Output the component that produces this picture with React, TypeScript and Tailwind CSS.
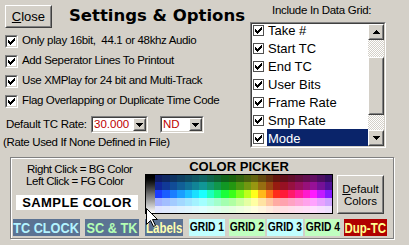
import React from "react";

const raisedOuter =
  "border border-t-white border-l-white border-b-[#404040] border-r-[#404040]";
const raisedInner =
  "border border-t-[#d4d0c8] border-l-[#d4d0c8] border-b-[#808080] border-r-[#808080]";
const sunkenOuter =
  "border border-t-[#808080] border-l-[#808080] border-b-white border-r-white";
const sunkenInner =
  "border border-t-[#404040] border-l-[#404040] border-b-[#d4d0c8] border-r-[#d4d0c8]";

function CheckMark({ color = "#000" }: { color?: string }) {
  return (
    <svg width="7" height="7" viewBox="0 0 7 7" shapeRendering="crispEdges">
      {[2, 3, 4, 3, 2, 1, 0].map((y, i) => (
        <rect key={i} x={i} y={y} width="1" height="3" fill={color} />
      ))}
    </svg>
  );
}

function Box3D() {
  return (
    <div className={`w-[13px] h-[13px] shrink-0 ${sunkenOuter}`}>
      <div className={`w-full h-full bg-white flex items-center justify-center ${sunkenInner}`}>
        <CheckMark />
      </div>
    </div>
  );
}

function FlatCheck() {
  return (
    <div className="w-[11px] h-[11px] shrink-0 border border-[#505050] bg-white flex items-center justify-center">
      <CheckMark />
    </div>
  );
}

function Tri({ dir }: { dir: "up" | "down" }) {
  const rows = [
    [3, 1],
    [2, 3],
    [1, 5],
    [0, 7],
  ];
  return (
    <svg width="7" height="4" viewBox="0 0 7 4" shapeRendering="crispEdges">
      {rows.map(([x, w], i) => (
        <rect key={i} x={x} y={dir === "up" ? i : 3 - i} width={w} height="1" fill="#000" />
      ))}
    </svg>
  );
}

function Raised({ className, children }: { className: string; children?: React.ReactNode }) {
  return (
    <div className={`${className} ${raisedOuter} bg-[#d4d0c8]`}>
      <div className={`w-full h-full flex items-center justify-center ${raisedInner}`}>{children}</div>
    </div>
  );
}

function Combo({ w, v }: { w: string; v: string }) {
  return (
    <div className={`${w} h-[17px] ${sunkenOuter}`}>
      <div className={`h-full bg-white flex ${sunkenInner}`}>
        <span className="flex-1 text-[#c00000] text-[11.5px] leading-[13px] pl-[1px]">{v}</span>
        <div className={`w-[13px] h-full ${raisedOuter} bg-[#d4d0c8]`}>
          <div className={`w-full h-full flex items-center justify-center ${raisedInner}`}>
            <Tri dir="down" />
          </div>
        </div>
      </div>
    </div>
  );
}

const checks = [
  "Only play 16bit,  44.1 or 48khz Audio",
  "Add Seperator Lines To Printout",
  "Use XMPlay for 24 bit and Multi-Track",
  "Flag Overlapping or Duplicate Time Code",
];

const gridItems = ["Take #", "Start TC", "End TC", "User Bits", "Frame Rate", "Smp Rate", "Mode"];

const hueStops: [number, number][] = [
  [0, 235],
  [6.5, 180],
  [10, 120],
  [13.5, 60],
  [16.5, 5],
  [21.5, -60],
  [24, -100],
];
function hueAt(c: number) {
  for (let i = 0; i < hueStops.length - 1; i++) {
    const [a, ha] = hueStops[i];
    const [b, hb] = hueStops[i + 1];
    if (c >= a && c <= b) return ha + ((c - a) / (b - a)) * (hb - ha);
  }
  return hueStops[hueStops.length - 1][1];
}
const paletteRows = [
  { s: 75, l: 22, h: 7 },
  { s: 80, l: 33, h: 8 },
  { s: 100, l: 55, h: 8 },
  { s: 100, l: 82, h: 8 },
  { s: 100, l: 94, h: 7 },
];
const COLS = 24;

function Palette() {
  return (
    <div className="h-[40px] border border-black flex bg-black">
      <div className="w-[9px] h-full bg-linear-to-b from-black via-[#707070] to-white" />
      <div className="flex-1 flex flex-col">
        {paletteRows.map((r, ri) => (
          <div key={ri} className="flex" style={{ height: r.h }}>
            {Array.from({ length: COLS }).map((_, ci) => {
              const h = (hueAt(ci + 0.5) + 360) % 360;
              return (
                <div
                  key={ci}
                  className="flex-1"
                  style={{ background: `hsl(${h} ${r.s}% ${r.l}%)` }}
                />
              );
            })}
          </div>
        ))}
      </div>
    </div>
  );
}

function Chip({
  cls,
  txt,
  text,
}: {
  cls: string;
  txt: string;
  text: string;
}) {
  return (
    <div className={`h-full flex items-center justify-center overflow-visible ${cls}`}>
      <span className={`font-bold whitespace-nowrap scale-x-[0.82] leading-none ${txt}`}>{text}</span>
    </div>
  );
}

export default function App() {
  return (
    <div className="w-[409px] h-[245px] bg-[#d4d0c8] overflow-hidden relative text-black font-['Liberation_Sans',Arial,sans-serif]">
      <div className="flex h-[155px]">
        {/* left column */}
        <div className="w-[245px] pl-[5px] pt-[5px]">
          <div className="flex items-center">
            <Raised className="w-[50px] h-[23px]">
              <span className="text-[13px] leading-none">
                <span className="underline">C</span>lose
              </span>
            </Raised>
            <div className="ml-[17px] font-['DejaVu_Sans',sans-serif] font-bold text-[16.5px] leading-none whitespace-nowrap">
              Settings &amp; Options
            </div>
          </div>
          <div className="mt-[3px]">
            {checks.map((c) => (
              <div key={c} className="flex items-center h-[20px]">
                <Box3D />
                <span className="ml-[4px] text-[11.5px] tracking-[-0.35px] whitespace-pre leading-none">{c}</span>
              </div>
            ))}
          </div>
          <div className="mt-[5px] flex items-center h-[17px]">
            <span className="w-[86px] pl-[1px] text-[11.5px] tracking-[-0.3px] leading-none">Default TC Rate:</span>
            <Combo w="w-[57px]" v="30.000" />
            <div className="ml-[12px]">
              <Combo w="w-[44px]" v="ND" />
            </div>
          </div>
          <div className="mt-[2px] -ml-[2px] text-[11.5px] tracking-[-0.35px] leading-[14px] whitespace-nowrap">
            (Rate Used If None Defined in File)
          </div>
        </div>
        {/* right column */}
        <div className="ml-[5px] w-[136px]">
          <div className="pt-[3px] pl-[22px] text-[11.5px] tracking-[-0.3px] leading-[14px] whitespace-nowrap">Include In Data Grid:</div>
          <div className={`mt-[5px] w-[136px] h-[126px] ${sunkenOuter}`}>
            <div className={`w-full h-full bg-white flex ${sunkenInner}`}>
              <div className="flex-1 overflow-hidden">
                <div className="-mt-[3px]">
                  {gridItems.map((g) => {
                    const sel = g === "Mode";
                    return (
                      <div key={g} className="flex items-center h-[18px] pl-[1px]">
                        <FlatCheck />
                        <span
                          className={`ml-[3px] pl-[1px] h-[18px] flex-1 flex items-center text-[13px] leading-none ${
                            sel ? "bg-[#0a246a] text-white" : ""
                          }`}
                        >
                          {g}
                        </span>
                      </div>
                    );
                  })}
                </div>
              </div>
              <div className="w-[16px] flex flex-col">
                <Raised className="w-[16px] h-[16px]">
                  <Tri dir="up" />
                </Raised>
                <div className="h-[17px] [background-image:repeating-conic-gradient(#d4d0c8_0%_25%,#ffffff_0%_50%)] [background-size:2px_2px]" />
                <Raised className="w-[16px] h-[58px]" />
                <div className="h-[15px] [background-image:repeating-conic-gradient(#d4d0c8_0%_25%,#ffffff_0%_50%)] [background-size:2px_2px]" />
                <Raised className="w-[16px] h-[16px]">
                  <Tri dir="down" />
                </Raised>
              </div>
            </div>
          </div>
        </div>
      </div>

      {/* color group */}
      <div className="ml-[10px] mt-[2px] w-[384px] h-[82px] border border-[#808080] shadow-[1px_1px_0_#ffffff,inset_1px_1px_0_#ffffff] flex flex-col">
        <div className="flex h-[61px]">
          <div className="w-[129px] pt-[5px]">
            <div className="pl-[16px] text-[11.5px] leading-[12px] tracking-[-0.45px] whitespace-nowrap">Right Click = BG Color</div>
            <div className="pl-[15px] text-[11.5px] leading-[12px] tracking-[-0.45px] whitespace-nowrap">Left Click = FG Color</div>
            <div className="mt-[8px] ml-[5px] w-[122px] h-[15px] bg-white flex items-center justify-center font-bold text-[13px] tracking-[0.4px] leading-none">
              SAMPLE COLOR
            </div>
          </div>
          <div className="ml-[5px] w-[188px]">
            <div className="h-[16px] flex items-center justify-center font-bold text-[13px] leading-none">COLOR PICKER</div>
            <Palette />
          </div>
          <div className="ml-[4px] mt-[17px]">
            <Raised className="w-[47px] h-[39px]">
              <div className="text-[11.5px] leading-[12px] text-center">
                <div>
                  <span className="underline">D</span>efault
                </div>
                <div>Colors</div>
              </div>
            </Raised>
          </div>
        </div>
        <div className="flex h-[17px] ml-[2px]">
          <Chip cls="w-[67px] bg-[#5b7393]" txt="text-[#b4f4ff] text-[15.5px]" text="TC CLOCK" />
          <Chip cls="ml-[5px] w-[54px] bg-[#5b7393]" txt="text-[#b4ffb4] text-[15.5px]" text="SC & TK" />
          <Chip cls="ml-[6px] w-[38px] bg-[#5b7393]" txt="text-[#ffffb0] text-[14px]" text="Labels" />
          <Chip cls="ml-[6px] w-[36px] bg-[#c0ffff]" txt="text-black text-[12.5px]" text="GRID 1" />
          <Chip cls="ml-[4px] w-[36px] bg-[#c0ffc0]" txt="text-black text-[12.5px]" text="GRID 2" />
          <Chip cls="ml-[2px] w-[36px] bg-[#c0ffff]" txt="text-black text-[12.5px]" text="GRID 3" />
          <Chip cls="ml-[2px] w-[35px] bg-[#c0ffc0]" txt="text-black text-[12.5px]" text="GRID 4" />
          <Chip cls="ml-[4px] w-[43px] bg-[#b00000]" txt="text-[#ffff90] text-[14px]" text="Dup-TC" />
        </div>
      </div>

      {/* mouse cursor */}
      <svg className="absolute left-[146px] top-[208px]" width="12" height="19" viewBox="0 0 12 19">
        <path
          d="M0.5 0.5 L0.5 16.5 L4.5 12.5 L7.5 18.5 L9.5 17.5 L6.5 11.5 L11.5 11.5 Z"
          fill="white"
          stroke="black"
          strokeWidth="1"
        />
      </svg>
    </div>
  );
}
